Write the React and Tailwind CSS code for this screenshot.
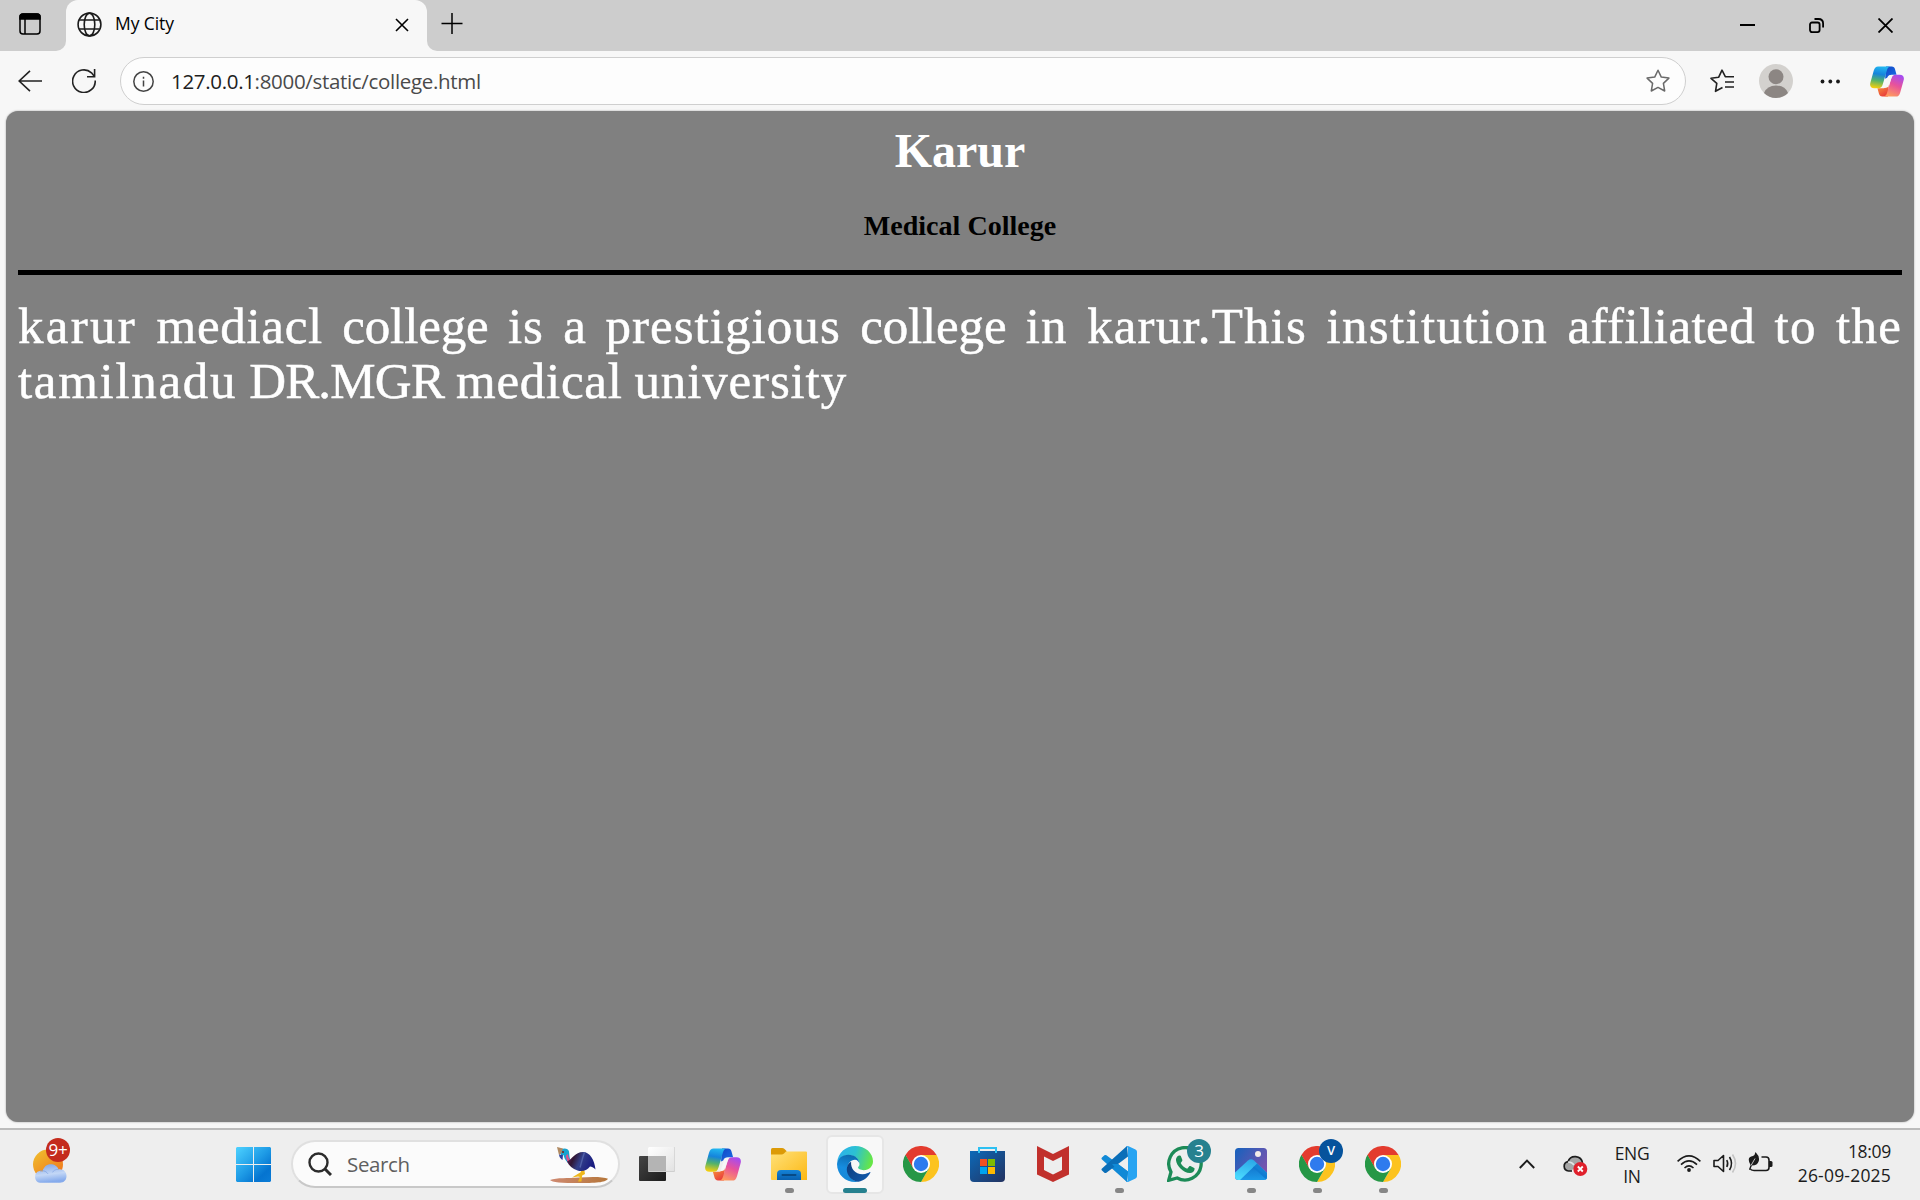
import React from "react";

function Globe() {
  return (
    <svg className="size-[25px]" viewBox="0 0 25 25" fill="none" stroke="#1b1b1b" strokeWidth="1.6">
      <circle cx="12.5" cy="12.5" r="11.4" />
      <ellipse cx="12.5" cy="12.5" rx="5.3" ry="11.4" />
      <path d="M2.2 8h20.6M2.2 17h20.6" />
    </svg>
  );
}

function Copilot({ className, id }) {
  return (
    <svg className={className} viewBox="0 0 36 34" preserveAspectRatio="none">
      <defs>
        <linearGradient id={id + "a"} x1="0.5" y1="0" x2="0.35" y2="1">
          <stop offset="0" stopColor="#22b7f0" />
          <stop offset="0.35" stopColor="#1584dc" />
          <stop offset="0.65" stopColor="#53b26b" />
          <stop offset="1" stopColor="#f6cf0c" />
        </linearGradient>
        <linearGradient id={id + "b"} x1="0.7" y1="0" x2="0.3" y2="1">
          <stop offset="0" stopColor="#a64cf0" />
          <stop offset="0.45" stopColor="#e8529b" />
          <stop offset="1" stopColor="#ff9d5c" />
        </linearGradient>
        <linearGradient id={id + "c"} x1="0" y1="0" x2="1" y2="1">
          <stop offset="0" stopColor="#1146c4" />
          <stop offset="1" stopColor="#1a6fe8" />
        </linearGradient>
        <linearGradient id={id + "d"} x1="0" y1="0" x2="0.6" y2="1">
          <stop offset="0" stopColor="#f9a03b" />
          <stop offset="1" stopColor="#e93c3c" />
        </linearGradient>
      </defs>
      <path d="M17 0.5H23c2 0 3 1.200 3.500 3l1.600 6H23c-2.500 0-4 1-4.800 3.500L16 14z" fill={`url(#${id}c)`} />
      <path d="M19 33.500H13c-2 0-3-1.200-3.500-3l-1.600-6H13c2.500 0 4-1 4.800-3.500L20 20z" fill={`url(#${id}d)`} />
      <path d="M8.500 0.500H22c-2.200 0-3.300 1.400-4 3.800l-4.400 15.500C12.700 23 11.500 24.500 8.500 24.500H4.500C1 24.500-.6 22 .4 18.300L4 5C5 1.700 6.300.5 8.500.5z" fill={`url(#${id}a)`} />
      <path d="M27.500 33.500H14c2.200 0 3.300-1.400 4-3.800l4.400-15.500C23.300 11 24.500 9.500 27.500 9.500h4c3.500 0 5.100 2.500 4.100 6.200L32 29c-1 3.300-2.300 4.500-4.500 4.500z" fill={`url(#${id}b)`} />
      <path d="M20.500 10.500H23.600L19.500 22.500Q18.800 24 15.500 24L19 12.500Q19.500 11 20.500 10.500z" fill="#f6f6f6" />
    </svg>
  );
}

function Chrome() {
  return (
    <svg className="size-9" viewBox="0 0 36 36">
      <path d="M18 18L2.400 9A18 18 0 0 1 33.600 9z" fill="#e33b2e" />
      <path d="M18 9H33.600A18 18 0 0 1 18 36L25.800 22.500z" fill="#fcc31e" />
      <path d="M10.200 22.500L2.400 9A18 18 0 0 0 18 36l7.800-13.500z" fill="#269746" />
      <path d="M2.400 9L10.200 22.500L18 9z" fill="#e33b2e" />
      <path d="M2.400 9L10.200 22.500L12 26L5 26A18 18 0 0 1 2.400 9z" fill="#269746" />
      <circle cx="18" cy="18" r="9" fill="#fff" />
      <circle cx="18" cy="18" r="7.200" fill="#2e7bee" />
    </svg>
  );
}

function Weather() {
  return (
    <svg className="h-[35px] w-9" viewBox="0 0 36 35">
      <defs>
        <linearGradient id="sun" x1="0" y1="0" x2="0.8" y2="1">
          <stop offset="0" stopColor="#f0c22e" />
          <stop offset="1" stopColor="#f0741c" />
        </linearGradient>
        <linearGradient id="cloud" x1="0" y1="0" x2="0.2" y2="1">
          <stop offset="0" stopColor="#7fa3e6" />
          <stop offset="0.6" stopColor="#c3d7f6" />
          <stop offset="1" stopColor="#86abec" />
        </linearGradient>
      </defs>
      <circle cx="16" cy="16.500" r="15" fill="url(#sun)" />
      <path d="M9.500 34.500a6 6 0 0 1-.5-11.700c1.500.2 2.500.3 3 .5C13 18.500 16.500 16 20 16c4 0 7 2 8 5.200 4.500-.8 8 2.300 8 6.600 0 4-2.600 6.700-6.500 6.700z" transform="translate(-1.5 .3)" fill="url(#cloud)" />
      <path d="M8 23c4-1 7 1 8 3" stroke="#7b9fe0" strokeWidth="1" fill="none" opacity=".7" />
      <path d="M26.500 21.400c-3-.2-5 1-6 3" stroke="#7b9fe0" strokeWidth="1" fill="none" opacity=".6" />
    </svg>
  );
}

function WindowsLogo() {
  return (
    <svg className="size-[35px]" viewBox="0 0 35 35">
      <defs>
        <linearGradient id="win" gradientUnits="userSpaceOnUse" x1="0" y1="0" x2="33" y2="35">
          <stop offset="0" stopColor="#4ed2ff" />
          <stop offset="0.5" stopColor="#1e9be6" />
          <stop offset="0.8" stopColor="#0574d0" />
          <stop offset="1" stopColor="#0a7bd6" />
        </linearGradient>
      </defs>
      <path d="M1 0H17V17H0V1zM18 0H34L35 1V17H18zM0 18H17V35H1L0 34zM18 18H35V34L34 35H18z" fill="url(#win)" />
    </svg>
  );
}

function Cassowary() {
  return (
    <svg className="h-[37px] w-[60px]" viewBox="0 0 60 37">
      <defs>
        <linearGradient id="bird" x1="0" y1="0" x2="1" y2="0.3">
          <stop offset="0" stopColor="#6a2468" />
          <stop offset="0.3" stopColor="#301634" />
          <stop offset="0.55" stopColor="#33408a" />
          <stop offset="1" stopColor="#191c80" />
        </linearGradient>
        <linearGradient id="earth" x1="0" y1="0" x2="1" y2="0">
          <stop offset="0" stopColor="#cf8a72" />
          <stop offset="1" stopColor="#b5763a" />
        </linearGradient>
      </defs>
      <path d="M1 33C8 30.500 19 31.500 30 30.500c12-.8 24-1 29 1.200C57 35 50 36 31 36 12 36 3 35.500 1 33z" fill="url(#earth)" />
      <path d="M31 21l1 4-5 3-4 2.500 6-1 2 .5-2 4.500h3.500l.6-6L36 27l-1-6z" fill="#efb71c" />
      <path d="M12 2.500c3-2 7.500-1 8 2 .5 3 0 6 2 9.500l-3 2c-3-3-4-6-4.500-8L12 8z" fill="#18a3cf" />
      <path d="M19 7c0 3 1.500 5.500 3.500 7.500l-2.500 2c-2.500-3-3-6-3-8z" fill="#e0508c" />
      <path d="M8 0l6 1.500-2 5L10 8z" fill="#b08a62" />
      <path d="M10 7.500l4 .5-.5 5c-2-1-3.300-3-3.500-5.500z" fill="#2a3c9c" />
      <circle cx="14" cy="5" r="1" fill="#7a1a1a" />
      <path d="M18 14.500c5-2 8-9.500 16-9.500 7 0 11.500 8 12.500 17.500C44 20 43 20 41 19.500c-3 4-8 5.500-12.500 4-5-1.500-8.500-5-10.500-9z" fill="url(#bird)" />
      <path d="M35.500 5.500c-2 5-3 10-4.500 15" stroke="#5060a8" strokeWidth="1.400" fill="none" />
    </svg>
  );
}

function TaskView() {
  return (
    <svg className="h-9 w-[38px]" viewBox="0 0 38 36">
      <defs>
        <linearGradient id="tvd" x1="0" y1="0" x2="1" y2="1"><stop offset="0" stopColor="#454545" /><stop offset="1" stopColor="#1c1c1c" /></linearGradient>
        <linearGradient id="tvl" x1="0" y1="0" x2="1" y2="1"><stop offset="0" stopColor="#fff" /><stop offset="1" stopColor="#e2e2e2" /></linearGradient>
      </defs>
      <rect x="1" y="10" width="27" height="25" rx="1" fill="url(#tvd)" />
      <rect x="10" y="1" width="27" height="25" rx="1" fill="#cfcfcf" />
      <rect x="10" y="1" width="26.300" height="24" rx="1" fill="url(#tvl)" />
      <path d="M10 10h18v15H10z" fill="#b4b4b4" />
    </svg>
  );
}

function Folder() {
  return (
    <svg className="size-9" viewBox="0 0 36 36">
      <defs>
        <linearGradient id="fold" x1="0" y1="0" x2="1" y2="1"><stop offset="0" stopColor="#ffe17a" /><stop offset="1" stopColor="#fcb813" /></linearGradient>
        <linearGradient id="foldb" x1="0" y1="0" x2="0" y2="1"><stop offset="0" stopColor="#1483d8" /><stop offset="1" stopColor="#0960b0" /></linearGradient>
      </defs>
      <path d="M0 3.500Q0 2 1.500 2H11q1.500 0 2.500 1l2 2V9H0z" fill="#dc9a07" />
      <path d="M0 8.500h10.500q1.500 0 2.500-1l2-2H35q1 0 1 1V34H1q-1 0-1-1z" fill="url(#fold)" />
      <path d="M6 34V28q0-4 4-4H26q4 0 4 4v6z" fill="url(#foldb)" />
      <path d="M11.500 29h13" stroke="#074a86" strokeWidth="2" strokeLinecap="round" />
    </svg>
  );
}

function Edge() {
  return (
    <svg className="size-9" viewBox="0 0 24 24">
      <defs>
        <linearGradient id="e1" x1="0" y1="0.2" x2="1" y2="0.4"><stop offset="0" stopColor="#2db0ee" /><stop offset="0.5" stopColor="#2cc1d2" /><stop offset="1" stopColor="#66e646" /></linearGradient>
        <linearGradient id="e2" x1="0.5" y1="0" x2="0.3" y2="1"><stop offset="0" stopColor="#0d6cb0" /><stop offset="0.5" stopColor="#168de0" /><stop offset="1" stopColor="#1787d4" /></linearGradient>
        <linearGradient id="e3" x1="0" y1="0" x2="1" y2="0.6"><stop offset="0" stopColor="#0c3c7c" /><stop offset="1" stopColor="#1158a8" /></linearGradient>
      </defs>
      <path d="M.1 11C.7 4.500 5.800 0 12.100 0 19 0 24 4.800 24 10.200c0 3.500-2.700 5.900-6.200 5.900-2.200 0-3.800-.7-3.800-1.700 0-.5 1-.9 1-2.400 0-2.700-2.400-5.800-7.300-5.800C4.500 6.200 1.500 8 .1 11z" fill="url(#e1)" />
      <path d="M0 12c.4-3.700 3.600-6.200 7.500-6.200 4.500 0 7.500 2.700 7.500 6.200-.4-1.700-1.600-2.800-3-2.800C9 9.200 7 12 7 15c0 5 4 8.700 7.400 8.800C7 25 0 20 0 12z" fill="url(#e2)" />
      <path d="M9.400 10.500C9 15 12 18.800 17 18.800c2.600 0 4-.9 4.900-1.400.3-.1.500.2.300.5C20.500 21 17.800 23.300 14.400 23.800 10 23.800 6.500 19.500 6.500 15.500c0-2.200 1.200-4 2.900-5z" fill="url(#e3)" />
    </svg>
  );
}

function Store() {
  return (
    <svg className="h-9 w-[35px]" viewBox="0 0 35 36">
      <defs>
        <linearGradient id="sto" x1="0" y1="0" x2="1" y2="1"><stop offset="0" stopColor="#0c69b8" /><stop offset="1" stopColor="#233260" /></linearGradient>
      </defs>
      <path d="M0 5H35V32q0 4-4 4H4q-4 0-4-4z" fill="url(#sto)" />
      <path d="M9 7V2H26V7" fill="none" stroke="#2cc0f2" strokeWidth="2" />
      <path d="M10 13h7v7h-7z" fill="#f25022" />
      <path d="M18 13h7v7h-7z" fill="#7fba00" />
      <path d="M10 21h7v7h-7z" fill="#00a4ef" />
      <path d="M18 21h7v7h-7z" fill="#ffb900" />
    </svg>
  );
}

function McAfee() {
  return (
    <svg className="h-9 w-8" viewBox="0 0 32 36">
      <path d="M0 0L16 8 32 0V28.500L16 36 0 28.500zM7 10.500V24l9 4.500 9-4.500V10.500L16 15z" fill="#c1302c" fillRule="evenodd" />
    </svg>
  );
}

function VSCode() {
  return (
    <svg className="size-9" viewBox="0 0 36 36">
      <path d="M26 36L1 13.600a1.600 1.600 0 0 1 0-2.200L3.400 9.300a1.600 1.600 0 0 1 2 0L27 25.500z" fill="#1089d6" />
      <path d="M26 0L1 22.400a1.600 1.600 0 0 0 0 2.200l2.400 2.100a1.600 1.600 0 0 0 2 0L27 10.500z" fill="#0a6eb8" />
      <path d="M11 18L26 36l1-10.500L17 18z" fill="#1089d6" />
      <path d="M27 0l7.500 3.500Q36 4.300 36 5.800V30.200q0 1.500-1.500 2.300L27 36q-1 0-2-1 2 .5 2-1.500V2.500q0-2-2-1.500 1-1 2-1z" fill="#27a4f2" />
    </svg>
  );
}

function WhatsApp() {
  return (
    <svg className="size-9" viewBox="0 0 36 36">
      <path d="M1.700 34.300L4 26A16.200 16.200 0 1 1 10.200 32z" fill="none" stroke="#1c8b57" strokeWidth="3.300" strokeLinejoin="miter" />
      <path d="M12.500 9.500c.9 0 1.200.2 1.600 1.200l1.200 3c.2.600.1 1-.3 1.500l-1.300 1.700c1.500 2.800 3.600 4.500 6.500 5.800l1.900-2.200c.4-.5.800-.6 1.300-.4l3.300 1.600c.7.300 1 .6.900 1.400-.3 2.600-2.400 4-4.800 3.900C16 26.700 9.400 19.500 9 14.200c-.1-2.400 1.500-4.700 3.500-4.700z" fill="#1c8b57" />
    </svg>
  );
}

function Photos() {
  return (
    <svg className="size-8" viewBox="0 0 32 32">
      <defs>
        <linearGradient id="ph1" x1="0" y1="0" x2="1" y2="0.7"><stop offset="0" stopColor="#1562bd" /><stop offset="1" stopColor="#7f52ad" /></linearGradient>
        <linearGradient id="ph2" x1="0.6" y1="0" x2="0.2" y2="1"><stop offset="0" stopColor="#2aa5e6" /><stop offset="1" stopColor="#4cdcff" /></linearGradient>
        <linearGradient id="ph3" x1="0" y1="0" x2="0" y2="1"><stop offset="0" stopColor="#1377ce" /><stop offset="1" stopColor="#1c9ae8" /></linearGradient>
        <clipPath id="phc"><rect width="32" height="32" rx="3.500" /></clipPath>
      </defs>
      <g clipPath="url(#phc)">
        <path d="M0 0H32V32H0z" fill="url(#ph1)" />
        <path d="M0 24.500L13 12.500q3-2.500 6 0L32 25v7H0z" fill="url(#ph2)" />
        <path d="M5 32L19 18.500 32 28v4z" fill="url(#ph3)" />
        <path d="M18 19.500l4-4L32 25v7z" fill="#0f7ad0" opacity=".9" />
      </g>
      <circle cx="23" cy="6" r="3" fill="#f3ece8" />
    </svg>
  );
}

function Badge({ className, children }) {
  return (
    <span className={"absolute flex size-6 items-center justify-center rounded-full text-white " + className}>
      {children}
    </span>
  );
}

function TaskbarApp({ children, running, active }) {
  return (
    <div className="relative flex h-[70px] w-[66px] items-center justify-center pb-[2px]">
      {active && <div className="absolute left-1 top-[5px] h-[59px] w-[58px] rounded-md border-2 border-[#e6e6e6] bg-[#f8f8f8]" />}
      <div className="relative">{children}</div>
      {running && <div className="absolute left-[29px] top-[58px] h-[5px] w-[9px] rounded-full bg-[#868686]" />}
      {active && <div className="absolute left-[21px] top-[58px] h-[5px] w-6 rounded-full bg-[#26818f]" />}
    </div>
  );
}

function TitleBar() {
  return (
    <div className="flex h-[51px] bg-[#cdcdcd] text-black">
      <div className="flex h-full w-[66px] rounded-br-[10px] bg-[#cdcdcd] pl-[19px] pt-[13px]">
        <svg className="size-[22px]" viewBox="0 0 22 22" fill="none" stroke="#000" strokeWidth="1.500">
          <rect x="1" y="1" width="20" height="20" rx="3" />
          <path d="M1 5V4q0-3 3-3H18q3 0 3 3V6H1z" fill="#000" />
          <path d="M6 6V21" />
        </svg>
      </div>
      <div className="-ml-3 h-full w-3 bg-[#f7f7f7]">
        <div className="h-full w-3 rounded-br-[10px] bg-[#cdcdcd]" />
      </div>
      <div className="flex h-full w-[361px] items-start rounded-t-[12px] bg-[#f7f7f7] pl-[11px] pt-[12px]">
        <Globe />
        <span className="ml-[13px] mt-[-1px] font-['Open_Sans'] text-[17.500px] leading-[24px] tracking-[-0.100px]">My City</span>
        <svg className="ml-auto mr-[18px] mt-[6px] size-[14px]" viewBox="0 0 14 14" stroke="#000" strokeWidth="1.600"><path d="M1 1l12 12M13 1L1 13" /></svg>
      </div>
      <div className="h-full w-3 bg-[#f7f7f7]">
        <div className="h-full w-3 rounded-bl-[10px] bg-[#cdcdcd]" />
      </div>
      <svg className="ml-[2px] mt-[12px] size-[22px]" viewBox="0 0 22 22" stroke="#000" strokeWidth="1.500"><path d="M11 1v21M.5 11.500h21" /></svg>
      <div className="ml-auto flex pr-[27px] pt-[18px]">
        <svg className="mr-[54px] h-[15px] w-[15px]" viewBox="0 0 15 15"><path d="M0 6h15v2H0z" /></svg>
        <svg className="mr-[54px] size-[15px]" viewBox="0 0 15 15" fill="none" stroke="#000" strokeWidth="1.800">
          <rect x="1" y="4.500" width="9.600" height="9.600" rx="2" />
          <path d="M5.500 1H9.500q4.600 0 4.600 4.600V9.500" />
        </svg>
        <svg className="size-[15px]" viewBox="0 0 15 15" stroke="#000" strokeWidth="1.800"><path d="M.5.500l14 14M14.500.500l-14 14" /></svg>
      </div>
    </div>
  );
}

function Toolbar() {
  return (
    <div className="flex h-[60px] items-center pl-[18px]">
      <svg className="h-[22px] w-6" viewBox="0 0 24 22" fill="none" stroke="#222" strokeWidth="1.600"><path d="M12 .8L1.200 11 12 21.200M1.200 11H24" /></svg>
      <svg className="ml-[30px] size-6" viewBox="0 0 24 24" fill="none" stroke="#222" strokeWidth="1.600">
        <path d="M23.200 11.500A11.300 11.300 0 1 1 19.500 3.800L22.500 7.500" />
        <path d="M22.600 0V7.700H15" />
      </svg>
      <div className="ml-6 flex h-[48px] w-[1566px] items-center rounded-full border-[1.500px] border-[#cfcfcf] bg-[#fdfdfd] pl-[12px] pr-[15px]">
        <svg className="size-[21px]" viewBox="0 0 21 21" fill="none" stroke="#444" strokeWidth="1.500">
          <circle cx="10.500" cy="10.500" r="9.700" />
          <path d="M10.500 9.500v6M10.500 5.800v2" />
        </svg>
        <span className="ml-[17px] font-['Open_Sans'] text-[20.500px] leading-[30px] tracking-[-0.320px] text-[#4a4a4a]">
          <span className="text-[#202020]">127.0.0.1</span>:8000/static/college.html
        </span>
        <svg className="ml-auto size-6" viewBox="0 0 24 24" fill="none" stroke="#6a6a6a" strokeWidth="1.500" strokeLinejoin="round">
          <path d="M12 1.200l3.300 6.900 7.600 1-5.500 5.300 1.300 7.600L12 18.400 5.300 22l1.300-7.600L1.100 9.100l7.600-1z" />
        </svg>
      </div>
      <svg className="ml-6 size-6" viewBox="0 0 24 24" fill="none" stroke="#222" strokeWidth="1.600" strokeLinejoin="round">
        <path d="M12.500 18.500L5.500 22.300l1.300-7.900L1 9.300l7.600-1L12 1.200l3.300 6.500H24M15 13h9M15 18h9" />
      </svg>
      <svg className="ml-[25px] size-[34px]" viewBox="0 0 34 34">
        <circle cx="17" cy="17" r="17" fill="#d3d1ce" />
        <circle cx="17" cy="12.700" r="7.500" fill="#8c8683" />
        <path d="M5 29q3-7.500 12-7.500T29 29q-5 5-12 5T5 29z" fill="#8c8683" />
      </svg>
      <svg className="ml-[27px] h-[5px] w-[21px]" viewBox="0 0 21 5" fill="#1a1a1a">
        <circle cx="2.500" cy="2.500" r="1.900" /><circle cx="10.300" cy="2.500" r="1.900" /><circle cx="18" cy="2.500" r="1.900" />
      </svg>
      <Copilot className="ml-[29px] h-[31px] w-[34px]" id="cpa" />
    </div>
  );
}

function Page() {
  return (
    <main className="mx-[6px] h-[1011px] rounded-[12px] bg-[#808080] px-3 font-['Liberation_Serif',serif] shadow-[0_0_2px_#999]">
      <h1 className="pt-[12px] text-center text-[48px] font-bold leading-[55px] text-white">Karur</h1>
      <h3 className="mt-[32px] text-center text-[28.080px] font-bold leading-[32px] text-black">Medical College</h3>
      <hr className="mt-[28px] h-[5px] border-0 bg-black" />
      <div className="mt-[24px] text-[51px] leading-[55px] text-white [-webkit-text-stroke:0.5px_white]">
        <p className="flex justify-between whitespace-nowrap">
          <span className="tracking-[2.300px]">karur</span>
          <span className="tracking-[0.700px]">mediacl</span>
          <span className="tracking-[-0.150px]">college</span>
          <span className="tracking-[1px]">is</span>
          <span>a</span>
          <span className="tracking-[1.050px]">prestigious</span>
          <span className="tracking-[-0.150px]">college</span>
          <span className="tracking-[1.100px]">in</span>
          <span className="tracking-[1.160px]">karur.This</span>
          <span className="tracking-[1.350px]">institution</span>
          <span className="tracking-[0.450px]">affiliated</span>
          <span className="tracking-[1.200px]">to</span>
          <span className="tracking-[1.200px]">the</span>
        </p>
        <p className="flex w-[829px] justify-between whitespace-nowrap">
          <span className="tracking-[1.700px]">tamilnadu</span>
          <span className="tracking-[-0.800px]">DR.MGR</span>
          <span className="tracking-[0.750px]">medical</span>
          <span className="tracking-[0.850px]">university</span>
        </p>
      </div>
    </main>
  );
}

function Taskbar() {
  return (
    <footer className="mt-[6px] flex h-[72px] items-start border-t-2 border-[#bcbcbc] bg-[#eeeeee] font-['Open_Sans'] text-[#1b1b1b]">
      <div className="relative ml-8 mt-[18px] w-9">
        <Weather />
        <Badge className="left-[14px] top-[-10px] bg-[#c42b1c] text-[17px] tracking-[-0.300px]">9+</Badge>
      </div>
      <div className="ml-[168px] mt-[17px]"><WindowsLogo /></div>
      <div className="ml-[20px] mt-[10px] flex h-[48px] w-[329px] items-center rounded-full border-2 border-[#e0e0e0] border-b-[#c8c8c8] bg-[#fbfbfb] pl-[15px] pr-[9px]">
        <svg className="size-[24px]" viewBox="0 0 24 24" fill="none" stroke="#2b2b2b" strokeWidth="2.400"><circle cx="10.500" cy="10.500" r="9" /><path d="M17 17l6 6" strokeWidth="3" /></svg>
        <span className="ml-[15px] text-[20.500px] tracking-[-0.350px] text-[#5f5f5f]">Search</span>
        <div className="ml-auto mt-[3px]"><Cassowary /></div>
      </div>
      <div className="ml-1 flex">
        <TaskbarApp><TaskView /></TaskbarApp>
        <TaskbarApp><Copilot className="h-[33px] w-9" id="cpb" /></TaskbarApp>
        <TaskbarApp running><Folder /></TaskbarApp>
        <TaskbarApp active><Edge /></TaskbarApp>
        <TaskbarApp><Chrome /></TaskbarApp>
        <TaskbarApp><Store /></TaskbarApp>
        <TaskbarApp><McAfee /></TaskbarApp>
        <TaskbarApp running><VSCode /></TaskbarApp>
        <TaskbarApp>
          <WhatsApp />
          <Badge className="left-5 top-[-7px] bg-[#26818f] text-[17px]">3</Badge>
        </TaskbarApp>
        <TaskbarApp running><Photos /></TaskbarApp>
        <TaskbarApp running>
          <Chrome />
          <Badge className="left-5 top-[-7px] bg-[#06539c] text-[13px] font-semibold text-[#c8dcf0]">V</Badge>
        </TaskbarApp>
        <TaskbarApp running><Chrome /></TaskbarApp>
      </div>
      <svg className="ml-[103px] mt-[29px] h-[10px] w-4" viewBox="0 0 16 10" fill="none" stroke="#1b1b1b" strokeWidth="1.900"><path d="M.8 9L8 1.500 15.200 9" /></svg>
      <svg className="ml-[28px] mt-[25px] h-[21px] w-[25px]" viewBox="0 0 25 21">
        <path d="M8 16H5.500A4.700 4.700 0 0 1 5 6.700 7.500 7.500 0 0 1 19 6" fill="#a6a6a6" />
        <path d="M9 16H5.500A4.700 4.700 0 0 1 5 6.700 7.500 7.500 0 0 1 19.500 8" fill="none" stroke="#1d1d1d" strokeWidth="1.700" />
        <path d="M5 7q4 0 6 3" stroke="#e5e5e5" strokeWidth="1.500" fill="none" />
        <circle cx="17.300" cy="14" r="7" fill="#e0202c" />
        <path d="M14.800 11.500l5 5M19.800 11.500l-5 5" stroke="#fff" strokeWidth="1.800" />
      </svg>
      <div className="ml-[21px] mt-[12px] w-[46px] text-center text-[17.500px] leading-[23px] tracking-[-0.300px]">ENG<br />IN</div>
      <svg className="ml-[22px] mt-[25px] h-[17px] w-6" viewBox="0 0 24 17" fill="none" stroke="#1b1b1b" strokeWidth="1.600">
        <path d="M.6 6.300Q12-4.500 23.400 6.300M4 9.700q8-7.500 16 0M7.500 13q4.500-4.200 9 0" />
        <circle cx="12" cy="15" r="1.900" fill="#1b1b1b" stroke="none" />
      </svg>
      <svg className="ml-[12px] mt-[23px] h-[21px] w-6" viewBox="0 0 24 21" fill="none" stroke="#1b1b1b" strokeWidth="1.600">
        <path d="M1 7.500H5L10.500 2.500V18.500L5 13.500H1z" strokeLinejoin="round" />
        <path d="M13.800 7q1.800 3.500 0 7M16.500 4q4 6.500 0 13" />
        <path d="M19.500 1.500q6 9 0 18" stroke="#c4c4c4" />
      </svg>
      <svg className="ml-[11px] mt-[22px] h-[20px] w-[25px]" viewBox="0 0 25 20">
        <path d="M13.500 5H18q3 0 3 3v7.500q0 3-3 3H6q-3 0-4-2" fill="none" stroke="#1b1b1b" strokeWidth="1.600" />
        <path d="M21 9h2q1.500 0 1.500 1.500v3Q24.500 15 23 15h-2z" fill="#1b1b1b" />
        <path d="M7.500 0q4.500 4.500 3.300 9Q9.500 13.500 4 13.500L2 18 1 17.500 2.500 13Q-2 5 5 4q2-1 2.500-4z" fill="#1b1b1b" />
        <path d="M7 6.500L3 13.500" stroke="#eee" strokeWidth=".8" />
      </svg>
      <div className="ml-auto mr-[29px] mt-[9px] text-right text-[17.500px] leading-[24px]"><span className="tracking-[-0.300px]">18:09</span><br /><span className="tracking-[0.200px]">26-09-2025</span></div>
    </footer>
  );
}

export default function App() {
  return (
    <div className="h-[1200px] w-[1920px] overflow-hidden bg-[#f7f7f7]">
      <TitleBar />
      <Toolbar />
      <Page />
      <Taskbar />
    </div>
  );
}
